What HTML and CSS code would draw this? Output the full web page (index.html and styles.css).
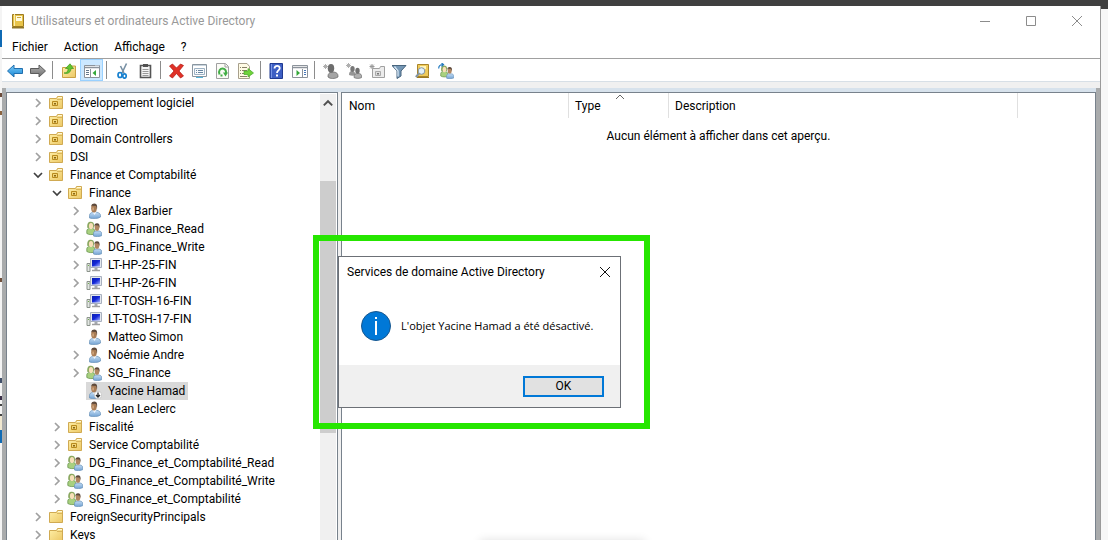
FILE: index.html
```
<!DOCTYPE html>
<html lang="fr">
<head>
<meta charset="utf-8">
<title>Utilisateurs et ordinateurs Active Directory</title>
<link rel="stylesheet" href="styles.css">
</head>
<body>
<svg class="sprite" aria-hidden="true">
  <defs>
    <linearGradient id="gold" x1="0" y1="0" x2="1" y2="1"><stop offset="0" stop-color="#fff0a8"/><stop offset="1" stop-color="#ecc866"/></linearGradient>
    <linearGradient id="blue" x1="0" y1="0" x2="0" y2="1"><stop offset="0" stop-color="#7ccbf8"/><stop offset="1" stop-color="#1686d4"/></linearGradient>
    <linearGradient id="grey" x1="0" y1="0" x2="0" y2="1"><stop offset="0" stop-color="#b4b4b4"/><stop offset="1" stop-color="#6c6c6c"/></linearGradient>
    <linearGradient id="screen" x1="0" y1="0" x2="1" y2="1"><stop offset="0" stop-color="#0a1fae"/><stop offset=".5" stop-color="#1327d8"/><stop offset="1" stop-color="#a9b8ff"/></linearGradient>
    <linearGradient id="shirt" x1="0" y1="0" x2="0" y2="1"><stop offset="0" stop-color="#c3dcf3"/><stop offset="1" stop-color="#73a3d4"/></linearGradient>
  </defs>
  <symbol id="folder" viewBox="0 0 16 16"><path d="M1.500 3.500h7l1-2h5v12h-13z" fill="url(#gold)" stroke="#d0aa52"/><path d="M10 2.500h4" stroke="#fff8d8"/><path d="M9 4.500h5" stroke="#d9b55c"/></symbol>
  <symbol id="ou" viewBox="0 0 16 16"><use href="#folder"/><path d="M4.500 6.500h5v4h-5z" fill="#f3d678" stroke="#b88a1d"/><path d="M6 8h2v1.500H6z" fill="#8a6716"/></symbol>
  <symbol id="user" viewBox="0 0 16 16"><path d="M3.500 15V12.500c0-2 1.500-2.800 3-3.200h4.500c2 .4 3.500 1.500 3.500 3.200V14c-2 1.800-8 2-11 1z" fill="url(#shirt)" stroke="#6790b8" stroke-width=".7"/><path d="M6.500 9l2 3 2-3z" fill="#eef6ff"/><ellipse cx="8" cy="5.200" rx="2.800" ry="4.200" fill="#a87c55"/><path d="M5.200 4C5 1.500 6.500.5 8.500.5c2.500.2 3 2.500 2.500 6L10 3l-4.300-.3z" fill="#5e4a3c"/><path d="M6.500 4.500h1.200v3H6.500z" fill="#dcb38c"/></symbol>
  <symbol id="group" viewBox="0 0 16 16"><path d="M.8 12.500V10c0-1.500 1-2.300 2.500-2.600h3c1.500.3 2.500 1 2.500 3v2.500c-2 1-6 1-8-.4z" fill="#a8d07f" stroke="#5d8c44" stroke-width=".7"/><path d="M1.400 7C.6 2.500 2.300.6 5.100.7c2.700.1 3.400 2.300 2.700 6z" fill="#8aa860"/><ellipse cx="5" cy="5" rx="2.100" ry="3.100" fill="#f8dfb8"/><path d="M7.500 15V12.500c0-1.600 1-2.200 2.500-2.500h3c2 .3 2.700 1.300 2.700 3v1.700c-2 1-6.200 1.200-8.200.3z" fill="url(#shirt)" stroke="#6790b8" stroke-width=".7"/><ellipse cx="11" cy="6.400" rx="2.300" ry="3.400" fill="#b08660"/><path d="M8.500 6c-.5-2.500.5-3.700 2.500-3.700 2.200 0 3 1.700 2.400 4.700l-1-2.500-3.400-.2z" fill="#5e4a3c"/></symbol>
  <symbol id="computer" viewBox="0 0 16 16"><path d="M1 6.500h3v8H1z" fill="#e2e6e2" stroke="#8c948c"/><path d="M2 8.500h1" stroke="#6fb04a"/><path d="M4.500 1.500h11v9h-11z" fill="#e4e8ee" stroke="#a8b0be"/><path d="M6 3h8v6.500H6z" fill="url(#screen)"/><path d="M8.500 11h3v2h-3z" fill="#a4a8b0"/><path d="M6 13.500h8" stroke="#a0a0a0" stroke-width="1.500"/></symbol>
  <symbol id="right" viewBox="0 0 10 10"><path d="M3 1l4 4-4 4" fill="none" stroke="#a0a0a0" stroke-width="1.700"/></symbol>
  <symbol id="down" viewBox="0 0 10 10"><path d="M1 3l4 4 4-4" fill="none" stroke="#404040" stroke-width="1.700"/></symbol>
</svg>

<div class="desktop">
  <div class="behind"></div>
  <main class="window">
    <header class="titlebar">
      <svg class="icon" viewBox="0 0 16 16"><path d="M2.500 1.500h11v12h-11z" fill="#e8c44a" stroke="#9c7a20"/><path d="M4 1h1v12H4z" fill="#fbeeb0"/><path d="M6 3h6v5H6z" fill="#fffbe0"/><path d="M7 4.500h4" stroke="#c7a545"/><path d="M2 14h12v1.500H2z" fill="#8f7526"/></svg>
      <h1 class="title">Utilisateurs et ordinateurs Active Directory</h1>
      <button class="caption" aria-label="Réduire"><svg viewBox="0 0 12 12"><path d="M1 6.500h10" /></svg></button>
      <button class="caption" aria-label="Agrandir"><svg viewBox="0 0 12 12"><path d="M1.500 1.500h9v9h-9z"/></svg></button>
      <button class="caption" aria-label="Fermer"><svg viewBox="0 0 12 12"><path d="M1 1l10 10M11 1L1 11"/></svg></button>
    </header>
    <nav class="menu">
      <button>Fichier</button><button>Action</button><button>Affichage</button><button>?</button>
    </nav>
    <div class="toolbar" role="toolbar">
      <button class="tool" aria-label="Précédent"><svg class="icon" viewBox="0 0 16 16"><path d="M.5 8L7 2v3.500h8.500v5H7V14z" fill="url(#blue)" stroke="#216fae"/></svg></button>
      <button class="tool" aria-label="Suivant"><svg class="icon" viewBox="0 0 16 16"><path d="M15.500 8L9 2v3.500H.5v5H9V14z" fill="url(#grey)" stroke="#5c5c5c"/></svg></button>
      <span class="sep"></span>
      <button class="tool" aria-label="Dossier parent"><svg class="icon" viewBox="0 0 16 16"><path d="M1.500 4.500h7l1-1.500h5v11.500h-13z" fill="url(#gold)" stroke="#c9a044"/><path d="M3 10c4 0 4-3 4-4.500H4.500L9 .8l3.500 4.700H10C10 9 7 11.500 3 10z" fill="#62c431" stroke="#3c9a1c" stroke-width=".7"/></svg></button>
      <button class="tool pressed" aria-label="Arborescence" aria-pressed="true"><svg class="icon" viewBox="0 0 16 16"><path d="M.5 2.500h15v12H.5z" fill="#fff" stroke="#8c939b"/><path d="M1 4.500h14" stroke="#8c939b" stroke-width="1.500"/><path d="M11 3h4" stroke="#dce6f0"/><path d="M6.500 6v8" stroke="#8c939b"/><path d="M2 7.500h3M2 9.500h3M2 11.500h3" stroke="#64788c"/><path d="M12 7v6L8.500 10z" fill="#35a83a"/></svg></button>
      <span class="sep"></span>
      <button class="tool" aria-label="Couper"><svg class="icon" viewBox="0 0 16 16"><path d="M11.500.5L7 10M5.500 3l3.500 7" stroke="#7890a4" stroke-width="1.600"/><ellipse cx="5" cy="12" rx="2" ry="2.500" fill="none" stroke="#1780cf" stroke-width="1.700"/><ellipse cx="9.500" cy="13" rx="1.700" ry="2.200" fill="none" stroke="#1780cf" stroke-width="1.700"/></svg></button>
      <button class="tool" aria-label="Coller"><svg class="icon" viewBox="0 0 16 16"><path d="M2.500 2.500h10v12h-10z" fill="#f4f4f4" stroke="#555" stroke-width="1.600"/><path d="M5 1h5v3H5z" fill="#505050"/><path d="M4.500 6.500h6M4.500 8.500h6M4.500 10.500h6M4.500 12.500h6" stroke="#999"/></svg></button>
      <span class="sep"></span>
      <button class="tool" aria-label="Supprimer"><svg class="icon" viewBox="0 0 16 16"><path d="M.5 3l3-2L7.500 5l4-4 3 1.500L10 8l4.500 5-3 2-4-4.500-4 4.500-3-2L5 8z" fill="#e03228" stroke="#b0150f" stroke-width=".7"/></svg></button>
      <button class="tool" aria-label="Propriétés"><svg class="icon" viewBox="0 0 16 16"><path d="M.5 1.500h14v12H.5z" fill="#fff" stroke="#8a96a0"/><path d="M1 2.500h13" stroke="#c8d4de"/><path d="M2.500 5.500h10v6h-10z" fill="#f7fafc" stroke="#9db2c4"/><path d="M4 7.500h1M4 9.500h1M6 7.500h5M6 9.500h5" stroke="#6885a0"/><path d="M4 14.500h7" stroke="#54b4da"/></svg></button>
      <button class="tool" aria-label="Actualiser"><svg class="icon" viewBox="0 0 16 16"><path d="M1.500.5h9l3 3v12h-12z" fill="#fbfbf6" stroke="#a0a0a0"/><path d="M10 1v3h3" fill="none" stroke="#a0a0a0"/><path d="M4.500 11.500C3 7.500 5.500 5.500 7.500 5.500c2.500 0 3.800 2 3.500 4.500M7.500 12.500h-2" fill="none" stroke="#43ae46" stroke-width="2"/><path d="M13 9.500H8l2.500 4z" fill="#43ae46"/></svg></button>
      <button class="tool" aria-label="Exporter"><svg class="icon" viewBox="0 0 16 16"><path d="M.5.500h8.500l2.500 3v12H.5z" fill="#fffbe5" stroke="#a8a08c"/><path d="M2 4.500h1M4 4.500h5M2 7.500h1M4 7.500h5M2 10.500h1M4 10.500h2M2 13.500h7" stroke="#877f68"/><path d="M6 8h4V5.500L15.500 10 10 14v-2.500H6z" fill="#70d33a" stroke="#45a82a" stroke-width=".7"/></svg></button>
      <span class="sep"></span>
      <button class="tool" aria-label="Aide"><svg class="icon" viewBox="0 0 16 16"><path d="M1 .5h12.500v15H1z" fill="#3d5fc4" stroke="#203a91"/><path d="M2.500 1v14" stroke="#7795e6"/><path d="M5.500 5.500C5.500 2 11 2 10.700 5.500 10.500 7.500 8 7.500 8 10" fill="none" stroke="#fff" stroke-width="1.800"/><path d="M7 11.500h2v2H7z" fill="#fff"/></svg></button>
      <button class="tool" aria-label="Volet Actions"><svg class="icon" viewBox="0 0 16 16"><path d="M.5 2.500h15v12H.5z" fill="#fff" stroke="#8c939b"/><path d="M1 4.500h14" stroke="#8c939b" stroke-width="1.500"/><path d="M10.500 6v8" stroke="#8c939b"/><path d="M12 7.500h2M12 9.500h2M12 11.500h2" stroke="#4878b8"/><path d="M4.500 7v6L8 10z" fill="#35a83a"/></svg></button>
      <span class="sep"></span>
      <button class="tool" aria-label="Nouvel utilisateur"><svg class="icon" viewBox="0 0 16 16"><path d="M5 13c0-2 1-3 3-4h3c3 .5 4 2 4 4v1c-3 2-8 2-10 0z" fill="#a4a4a4" stroke="#666" stroke-width=".7"/><ellipse cx="8" cy="5.300" rx="3.200" ry="4.400" fill="#6d6d6d"/><path d="M2.500 1v5M0 3.500h5M.8 1.800l3.400 3.400M4.200 1.800L.8 5.200" stroke="#b0b0b0"/></svg></button>
      <button class="tool" aria-label="Nouveau groupe"><svg class="icon" viewBox="0 0 16 16"><path d="M3 12c0-3 1-4 3-4s3 1 4 4c-2 1-5 1-7 0z" fill="#959595"/><ellipse cx="6.500" cy="6" rx="2.200" ry="3" fill="#777"/><path d="M8 14.500c0-3 1-4 4-4s3.700 1 3.700 4c-2 1.200-5.700 1.200-7.700 0z" fill="#b0b0b0" stroke="#6b6b6b" stroke-width=".7"/><ellipse cx="11.500" cy="7.800" rx="2.200" ry="3" fill="#707070"/><path d="M2.500 0v5M0 2.500h5M.8.8l3.400 3.400M4.200.8L.8 4.200" stroke="#b0b0b0"/></svg></button>
      <button class="tool" aria-label="Nouvelle unité d'organisation"><svg class="icon" viewBox="0 0 16 16"><path d="M3.500 5.500h7l1-2h4v11h-12z" fill="#ececec" stroke="#a0a0a0"/><path d="M6.500 8.500h5v4h-5z" fill="#ddd" stroke="#aaa"/><path d="M8 10h2v1.500H8z" fill="#777"/><path d="M3 1v5M.5 3.500h5M1.200 1.700l3.600 3.600M4.800 1.700L1.200 5.300" stroke="#999"/></svg></button>
      <button class="tool" aria-label="Filtre"><svg class="icon" viewBox="0 0 16 16"><path d="M0 2.500h14L9 8v5l-4 2.500V8z" fill="#7597b5" stroke="#48657e"/><path d="M2.500 3.500L6 8v5.500" fill="none" stroke="#d6e6f4" stroke-width="1.300"/></svg></button>
      <button class="tool" aria-label="Rechercher"><svg class="icon" viewBox="0 0 16 16"><path d="M2.500 1.500h11v12h-11z" fill="#efcb5c" stroke="#aa8427"/><path d="M5 3h6v3H5z" fill="#fff4bc"/><path d="M2 14h12v1H2z" fill="#9c7a20"/><circle cx="6.500" cy="8" r="3.300" fill="#e3f2fc" stroke="#8294a3"/><path d="M4 10.500L.8 14" stroke="#8294a3" stroke-width="2"/></svg></button>
      <button class="tool" aria-label="Ajouter à un groupe"><svg class="icon" viewBox="0 0 16 16"><g transform="translate(2 2) scale(.88)"><use href="#group" width="16" height="16"/></g><path d="M.7 5.500C.7 3 2 1.500 5 1.500M3.500 0L5.500 1.500 3.500 3.500" fill="none" stroke="#237bc0" stroke-width="1.200"/></svg></button>
    </div>
    <div class="strip"></div>
    <div class="panes">
      <nav class="tree" aria-label="Arborescence">
        <ul class="nodes">
          <li><div class="row"><button class="twist" aria-label="Développer"><svg><use href="#right"/></svg></button><svg class="icon"><use href="#ou"/></svg><span class="name">Développement logiciel</span></div></li>
          <li><div class="row"><button class="twist" aria-label="Développer"><svg><use href="#right"/></svg></button><svg class="icon"><use href="#ou"/></svg><span class="name">Direction</span></div></li>
          <li><div class="row"><button class="twist" aria-label="Développer"><svg><use href="#right"/></svg></button><svg class="icon"><use href="#ou"/></svg><span class="name">Domain Controllers</span></div></li>
          <li><div class="row"><button class="twist" aria-label="Développer"><svg><use href="#right"/></svg></button><svg class="icon"><use href="#ou"/></svg><span class="name">DSI</span></div></li>
          <li><div class="row"><button class="twist" aria-label="Réduire"><svg><use href="#down"/></svg></button><svg class="icon"><use href="#ou"/></svg><span class="name">Finance et Comptabilité</span></div>
            <ul>
              <li><div class="row"><button class="twist" aria-label="Réduire"><svg><use href="#down"/></svg></button><svg class="icon"><use href="#ou"/></svg><span class="name">Finance</span></div>
                <ul>
                  <li><div class="row"><button class="twist" aria-label="Développer"><svg><use href="#right"/></svg></button><svg class="icon"><use href="#user"/></svg><span class="name">Alex Barbier</span></div></li>
                  <li><div class="row"><button class="twist" aria-label="Développer"><svg><use href="#right"/></svg></button><svg class="icon"><use href="#group"/></svg><span class="name">DG_Finance_Read</span></div></li>
                  <li><div class="row"><button class="twist" aria-label="Développer"><svg><use href="#right"/></svg></button><svg class="icon"><use href="#group"/></svg><span class="name">DG_Finance_Write</span></div></li>
                  <li><div class="row"><button class="twist" aria-label="Développer"><svg><use href="#right"/></svg></button><svg class="icon"><use href="#computer"/></svg><span class="name">LT-HP-25-FIN</span></div></li>
                  <li><div class="row"><button class="twist" aria-label="Développer"><svg><use href="#right"/></svg></button><svg class="icon"><use href="#computer"/></svg><span class="name">LT-HP-26-FIN</span></div></li>
                  <li><div class="row"><button class="twist" aria-label="Développer"><svg><use href="#right"/></svg></button><svg class="icon"><use href="#computer"/></svg><span class="name">LT-TOSH-16-FIN</span></div></li>
                  <li><div class="row"><button class="twist" aria-label="Développer"><svg><use href="#right"/></svg></button><svg class="icon"><use href="#computer"/></svg><span class="name">LT-TOSH-17-FIN</span></div></li>
                  <li><div class="row"><span class="twist"></span><svg class="icon"><use href="#user"/></svg><span class="name">Matteo Simon</span></div></li>
                  <li><div class="row"><button class="twist" aria-label="Développer"><svg><use href="#right"/></svg></button><svg class="icon"><use href="#user"/></svg><span class="name">Noémie Andre</span></div></li>
                  <li><div class="row"><button class="twist" aria-label="Développer"><svg><use href="#right"/></svg></button><svg class="icon"><use href="#group"/></svg><span class="name">SG_Finance</span></div></li>
                  <li><div class="row"><span class="twist"></span><span class="selected"><svg class="icon" viewBox="0 0 16 16"><use href="#user"/><circle cx="12" cy="12" r="3.700" fill="#fff" stroke="#aaa" stroke-width=".5"/><path d="M12 9.500V14M10 12l2 2 2-2" fill="none" stroke="#222" stroke-width="1.300"/></svg><span class="name">Yacine Hamad</span></span></div></li>
                  <li><div class="row"><span class="twist"></span><svg class="icon"><use href="#user"/></svg><span class="name">Jean Leclerc</span></div></li>
                </ul>
              </li>
              <li><div class="row"><button class="twist" aria-label="Développer"><svg><use href="#right"/></svg></button><svg class="icon"><use href="#ou"/></svg><span class="name">Fiscalité</span></div></li>
              <li><div class="row"><button class="twist" aria-label="Développer"><svg><use href="#right"/></svg></button><svg class="icon"><use href="#ou"/></svg><span class="name">Service Comptabilité</span></div></li>
              <li><div class="row"><button class="twist" aria-label="Développer"><svg><use href="#right"/></svg></button><svg class="icon"><use href="#group"/></svg><span class="name">DG_Finance_et_Comptabilité_Read</span></div></li>
              <li><div class="row"><button class="twist" aria-label="Développer"><svg><use href="#right"/></svg></button><svg class="icon"><use href="#group"/></svg><span class="name">DG_Finance_et_Comptabilité_Write</span></div></li>
              <li><div class="row"><button class="twist" aria-label="Développer"><svg><use href="#right"/></svg></button><svg class="icon"><use href="#group"/></svg><span class="name">SG_Finance_et_Comptabilité</span></div></li>
            </ul>
          </li>
          <li><div class="row"><button class="twist" aria-label="Développer"><svg><use href="#right"/></svg></button><svg class="icon"><use href="#folder"/></svg><span class="name">ForeignSecurityPrincipals</span></div></li>
          <li><div class="row"><button class="twist" aria-label="Développer"><svg><use href="#right"/></svg></button><svg class="icon"><use href="#folder"/></svg><span class="name">Keys</span></div></li>
        </ul>
        <div class="scrollbar">
          <svg class="arrow" viewBox="0 0 10 10"><path d="M1.500 7L5 3.500 8.500 7" fill="none" stroke="#505050" stroke-width="1.600"/></svg>
          <div class="thumb"></div>
        </div>
      </nav>
      <section class="list">
        <table>
          <colgroup><col class="c-name"><col class="c-type"><col class="c-desc"><col></colgroup>
          <thead><tr><th>Nom</th><th>Type<svg class="sort" viewBox="0 0 10 6"><path d="M1 5l4-4 4 4" fill="none" stroke="#666"/></svg></th><th>Description</th><th></th></tr></thead>
          <tbody><tr><td colspan="4">Aucun élément à afficher dans cet aperçu.</td></tr></tbody>
        </table>
      </section>
    </div>
  </main>
  <div class="edge"></div>
  <div class="highlight"></div>
  <section class="dialog" role="dialog" aria-labelledby="dialog-title">
    <header class="dialog-head">
      <h2 id="dialog-title">Services de domaine Active Directory</h2>
      <button class="close" aria-label="Fermer"><svg viewBox="0 0 12 12"><path d="M1 1l10 10M11 1L1 11"/></svg></button>
    </header>
    <div class="dialog-body">
      <svg class="info" viewBox="0 0 32 32"><circle cx="16" cy="16" r="14.500" fill="#0078d7" stroke="#17578f"/><path d="M15 7h2v2h-2zM15 11h2v14h-2z" fill="#fff"/></svg>
      <p class="message">L'objet Yacine Hamad a été désactivé.</p>
    </div>
    <footer class="dialog-foot"><button class="ok">OK</button></footer>
  </section>
  <div class="popup-shadow"></div>
</div>
</body>
</html>
```

FILE: styles.css
```
* { box-sizing: border-box; }
body { margin: 0; font: 12px/18px Roboto, "Open Sans", sans-serif; color: #000; }
h1, h2, p, ul { margin: 0; padding: 0; font: inherit; list-style: none; }
button { margin: 0; padding: 0; border: 0; background: none; font: inherit; color: inherit; }
svg { display: block; }
.sprite { position: absolute; width: 0; height: 0; }
.icon { width: 16px; height: 16px; flex: none; }

.desktop { position: relative; display: flex; height: 100vh; overflow: hidden; padding-top: 6px; background: linear-gradient(#404040 9px, #f7f7f7 9px); }
.behind { flex: none; width: 2px; background: linear-gradient(#f4f4f4 24px, #0f6ab4 24px 41px, #f4f4f4 41px 87px, #6b4a3a 87px 91px, #f4f4f4 91px 105px, #8b6340 105px 109px, #f4f4f4 109px 272px, #70503c 272px 276px, #f4f4f4 276px 372px, #42506a 372px 377px, #f4f4f4 377px 390px, #3b3048 390px 394px, #f4f4f4 394px 398px, #444 398px 400px, #f4f4f4 400px 408px, #444 408px 410px, #f0e8d0 410px 424px, #0f6ab4 424px 437px, #f4f4f4 437px); }
.edge { flex: none; width: 7px; }
.window { flex: 1; min-width: 0; display: flex; flex-direction: column; background: #fff; border-right: 1px solid #9a9a9a; }

.titlebar { flex: none; display: flex; align-items: center; height: 29px; padding-left: 8px; color: #999; }
.title { flex: 1; margin-left: 5px; white-space: nowrap; }
.caption { display: flex; align-items: center; justify-content: center; width: 46px; height: 29px; }
.caption svg { width: 12px; height: 12px; fill: none; stroke: #8c8c8c; }
.menu { flex: none; display: flex; gap: 16px; height: 24px; align-items: center; padding-left: 10px; border-bottom: 1px solid #a0a0a0; }
.toolbar { flex: none; display: flex; height: 23px; padding: 0 1px; border-bottom: 1px solid #d7dfe6; }
.tool { display: flex; align-items: center; justify-content: center; width: 23px; height: 22px; padding-top: 2px; }
.pressed { background: #cce8ff; border: 1px solid #99d1ff; padding-top: 1px; }
.sep { width: 8px; height: 20px; background: linear-gradient(#8c8c8c, #8c8c8c) 3px 2px / 1px 18px no-repeat; }
.strip { flex: none; height: 6px; background: #f0f0f0; }

.panes { flex: 1; min-height: 0; display: flex; gap: 3px; padding-top: 4px; border: solid #a9abac; border-width: 0 4px; background: linear-gradient(#d7e2ec 4px, #f0f0f0 4px); }
.tree { flex: none; display: flex; width: 332px; border: 1px solid #78828c; border-bottom: 0; background: #fff; overflow: hidden; }
.nodes { flex: 1; padding: 1px 0 0 22px; }
.nodes ul { padding-left: 19px; }
.row { display: flex; align-items: center; height: 18px; white-space: nowrap; }
.twist { flex: none; width: 19px; height: 18px; padding: 0 0 0 4px; display: flex; align-items: center; }
.twist svg { width: 10px; height: 10px; }
.name { margin-left: 6px; }
.selected { display: flex; align-items: center; height: 18px; padding-right: 3px; background: #d9d9d9; }
.scrollbar { flex: none; width: 16px; margin: 1px 1px 0 0; background: #f0f0f0; display: flex; flex-direction: column; align-items: center; }
.arrow { width: 12px; height: 12px; margin: 3px 0 72px; }
.thumb { width: 100%; height: 252px; background: #cdcdcd; }

.list { flex: 1; min-width: 0; border: 1px solid #78828c; border-bottom: 0; background: #fff; }
table { width: 100%; table-layout: fixed; border-collapse: separate; border-spacing: 0; }
.c-name { width: 227px; }
.c-type { width: 100px; }
.c-desc { width: 349px; }
th { position: relative; height: 25px; padding: 0 6px; font-weight: normal; text-align: left; border-right: 1px solid #e0e0e0; }
th:first-child { padding-left: 7px; }
th:last-child { border-right: 0; }
.sort { position: absolute; top: 1px; left: 46px; width: 10px; height: 6px; }
td { padding: 9px 0; text-align: center; }

.highlight { position: absolute; left: 313px; top: 235px; width: 337px; height: 194px; border: 6px solid #26e600; }
.dialog { position: absolute; left: 338px; top: 256px; width: 283px; border: 1px solid #6c7076; background: #fff; }
.dialog-head { display: flex; align-items: center; justify-content: space-between; height: 30px; padding: 0 9px 0 8px; }
.close svg { width: 12px; height: 12px; fill: none; stroke: #111; }
.dialog-body { display: flex; align-items: center; gap: 9px; height: 78px; padding-left: 21px; }
.info { width: 32px; height: 32px; }
.message { font-family: "Open Sans", "Noto Sans", sans-serif; font-size: 11px; }
.dialog-foot { display: flex; justify-content: flex-end; padding: 11px 16px 10px; background: #f0f0f0; }
.ok { width: 81px; height: 21px; border: 2px solid #0078d7; background: #e1e1e1; line-height: 17px; }
.popup-shadow { position: absolute; left: 480px; top: 100%; width: 165px; height: 20px; box-shadow: 0 0 10px rgba(0, 0, 0, .12); }
```
